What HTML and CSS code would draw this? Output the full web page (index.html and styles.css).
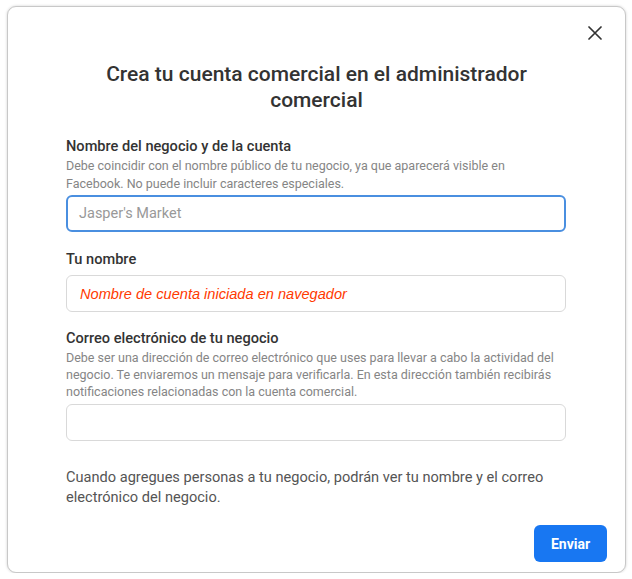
FILE: index.html
```html
<!DOCTYPE html>
<html lang="es">
<head>
    <meta charset="UTF-8">
    <meta name="viewport" content="width=device-width, initial-scale=1.0">
    <title>Crea tu cuenta comercial</title>
    <link rel="stylesheet" href="styles.css">
</head>
<body>
    <div class="dialog">
        <div class="top">
            <span class="close">
                <svg width="14" height="14" viewBox="0 0 14 14"><path d="M1 1L13 13M13 1L1 13" stroke="#333" stroke-width="1.7" fill="none" stroke-linecap="round"/></svg>
            </span>
        </div>
        <h1 class="title">Crea tu cuenta comercial en el administrador comercial</h1>
        <div class="form">
            <div class="field first">
                <div class="label">Nombre del negocio y de la cuenta</div>
                <div class="desc">Debe coincidir con el nombre público de tu negocio, ya que aparecerá visible en Facebook. No puede incluir caracteres especiales.</div>
                <div class="input focus"><span class="placeholder">Jasper's Market</span></div>
            </div>
            <div class="field">
                <div class="label">Tu nombre</div>
                <div class="input plain"><span class="hint">Nombre de cuenta iniciada en navegador</span></div>
            </div>
            <div class="field mail">
                <div class="label">Correo electrónico de tu negocio</div>
                <div class="desc small">Debe ser una dirección de correo electrónico que uses para llevar a cabo la actividad del negocio. Te enviaremos un mensaje para verificarla. En esta dirección también recibirás notificaciones relacionadas con la cuenta comercial.</div>
                <div class="input"></div>
            </div>
            <p class="note">Cuando agregues personas a tu negocio, podrán ver tu nombre y el correo electrónico del negocio.</p>
        </div>
        <div class="bottom">
            <button class="send">Enviar</button>
        </div>
    </div>
</body>
</html>
```

FILE: styles.css
```css
*{
    padding: 0;
    margin: 0;
    box-sizing: border-box;
}
body{
    background: #fff;
    font-family: Roboto, "Liberation Sans", Arial, sans-serif;
    color: #333;
}
.dialog{
    width: 619px;
    height: 567px;
    margin: 6px 0 0 7px;
    border: 1px solid #c8c8c8;
    border-radius: 9px;
    box-shadow: 0 0 3px rgba(0,0,0,0.18);
    background: #fff;
}
.top{
    display: flex;
    justify-content: flex-end;
    padding: 19px 23px 0 0;
}
.close{
    display: block;
    width: 14px;
    height: 14px;
}
.close svg{
    display: block;
}
.title{
    margin-top: 21px;
    padding: 0 80px;
    text-align: center;
    font-size: 21px;
    line-height: 26px;
    font-weight: 500;
    color: #333;
}
.form{
    padding: 0 59px 0 58px;
}
.field{
    margin-top: 18px;
}
.field.first{
    margin-top: 24px;
}
.field.mail{
    margin-top: 17px;
}
.label{
    font-size: 14.6px;
    line-height: 18px;
    font-weight: 500;
    color: #333;
}
.desc{
    max-width: 492px;
    margin-top: 2px;
    font-size: 12.5px;
    line-height: 18px;
    color: #858585;
}
.desc.small{
    line-height: 17px;
}
.input{
    margin-top: 4px;
    height: 37px;
    border: 1px solid #d9d9d9;
    border-radius: 6px;
    display: flex;
    align-items: center;
    padding: 0 13px;
}
.input.plain{
    margin-top: 7px;
}
.input.focus{
    margin-top: 2px;
    border: 2px solid #4a8fe0;
    padding: 0 11px;
}
.placeholder{
    font-size: 14.5px;
    color: #999;
}
.hint{
    font-family: "Liberation Sans", Arial, sans-serif;
    font-style: italic;
    font-size: 14.6px;
    color: #ff3a00;
}
.note{
    margin-top: 26px;
    font-size: 14.6px;
    line-height: 20px;
    color: #555;
}
.bottom{
    display: flex;
    justify-content: flex-end;
    padding: 18px 18px 0 0;
}
.send{
    width: 73px;
    height: 37px;
    border: none;
    border-radius: 6px;
    background: #1877f2;
    color: #fff;
    font-family: Roboto, "Liberation Sans", Arial, sans-serif;
    font-size: 14px;
    font-weight: 700;
}
```
